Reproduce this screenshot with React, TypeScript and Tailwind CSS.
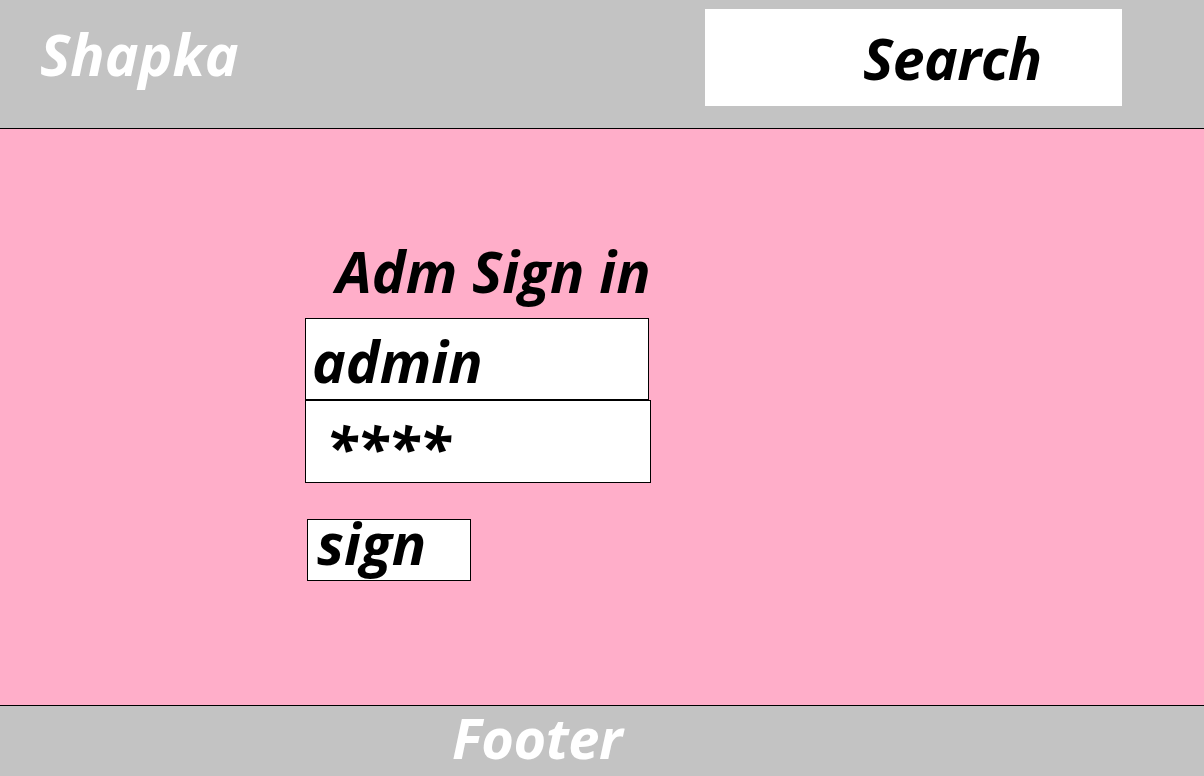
export default function App() {
  const f = "font-['Open_Sans','Noto_Sans',sans-serif] font-bold italic";
  return (
    <div className={`flex h-[776px] w-[1204px] flex-col overflow-hidden ${f}`}>
      <header className="flex h-[129px] shrink-0 items-start border-b border-black bg-[#c3c3c3]">
        <div className="pl-[40px] pt-[4px] text-[57px] leading-[100px] text-white">Shapka</div>
        <div className="ml-auto mr-[82px] mt-[9px] h-[97px] w-[417px] bg-white pl-[158px] text-[57px] leading-[98px] tracking-[-0.5px] text-black">
          Search
        </div>
      </header>
      <main className="flex-1 bg-[#ffaec9] pl-[305px] pt-[92px]">
        <div className="pl-[31px] text-[57px] leading-[100px] text-black">Adm Sign in</div>
        <div className="mt-[-3px] h-[82px] w-[344px] border border-black bg-white pl-[6px] text-[57px] leading-[85px] text-black">
          admin
        </div>
        <div className="h-[83px] w-[346px] border border-black bg-white pl-[20px] pt-[4px] text-[57px] leading-[85px] text-black">
          ****
        </div>
        <div className="ml-[2px] mt-[36px] h-[62px] w-[164px] border border-black bg-white pl-[9px] text-[57px] leading-[46px] text-black">
          sign
        </div>
      </main>
      <footer className="h-[71px] shrink-0 border-t border-black bg-[#c3c3c3] pl-[452px] pt-[3px]">
        <div className="text-[56px] leading-[57px] tracking-[-0.5px] text-white">Footer</div>
      </footer>
    </div>
  );
}
